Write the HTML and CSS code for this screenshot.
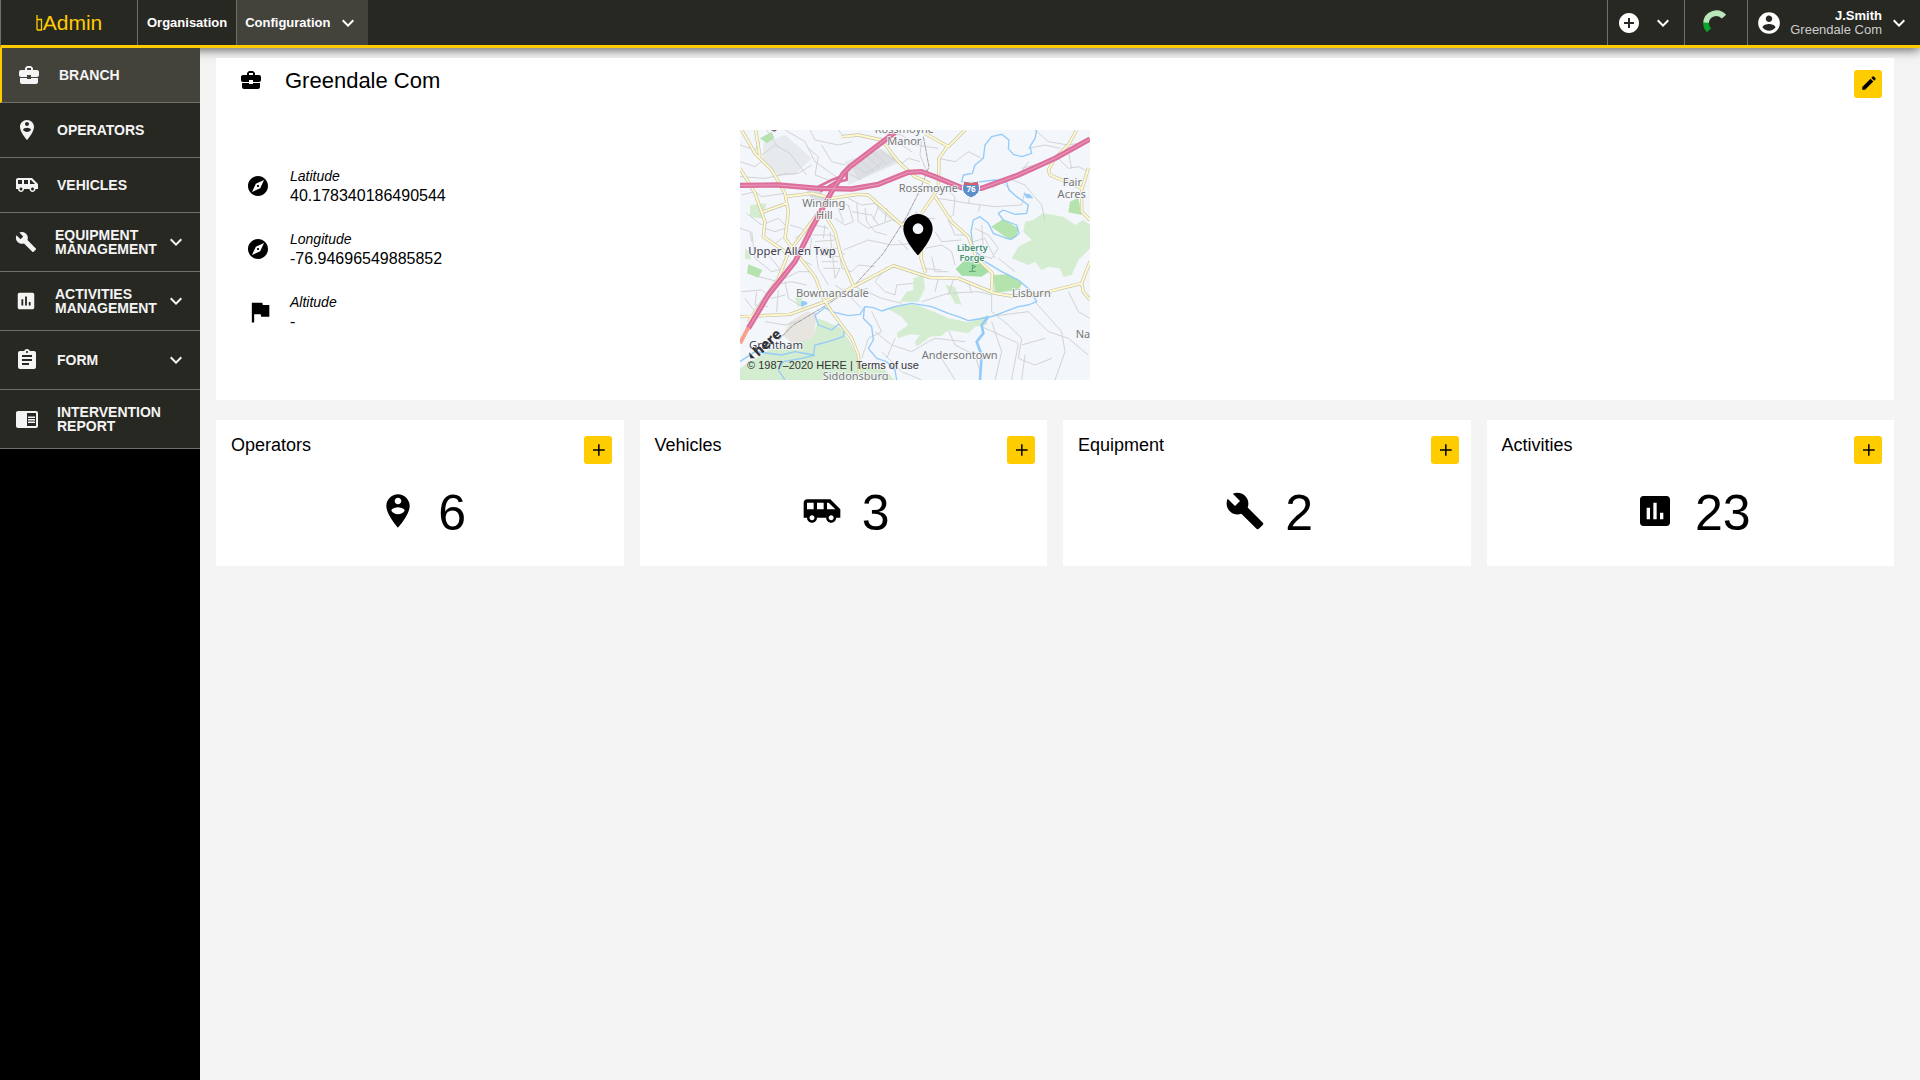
FILE: index.html
```html
<!DOCTYPE html>
<html lang="en">
<head>
<meta charset="utf-8">
<meta name="viewport" content="width=device-width, initial-scale=1">
<title>Admin – Branch</title>
<link rel="stylesheet" href="styles.css">
</head>
<body>
<svg class="sprite" aria-hidden="true">
  <symbol id="i-branch" viewBox="0 0 24 24"><path d="M10 16v-1H3.01L3 19c0 1.11.89 2 2 2h14c1.11 0 2-.89 2-2v-4h-7v1h-4zm10-9h-4.01V5l-2-2h-4l-2 2v2H4c-1.1 0-2 .9-2 2v3c0 1.11.89 2 2 2h6v-2h4v2h6c1.1 0 2-.9 2-2V9c0-1.1-.9-2-2-2zm-6 0h-4V5h4v2z"/></symbol>
  <symbol id="i-operator" viewBox="0 0 24 24"><path d="M12 2C8.14 2 5 5.14 5 9c0 5.25 7 13 7 13s7-7.75 7-13c0-3.86-3.14-7-7-7zm0 2c1.1 0 2 .9 2 2 0 1.11-.9 2-2 2s-2-.89-2-2c0-1.1.9-2 2-2zm0 10c-1.67 0-3.14-.85-4-2.15.02-1.32 2.67-2.05 4-2.05s3.98.73 4 2.05c-.86 1.3-2.33 2.15-4 2.15z"/></symbol>
  <symbol id="i-vehicle" viewBox="0 0 24 24"><path d="M17 5H3c-1.1 0-2 .89-2 2v9h2c0 1.65 1.34 3 3 3s3-1.35 3-3h5.5c0 1.65 1.34 3 3 3s3-1.35 3-3H23v-5l-6-6zM3 11V7h4v4H3zm3 6.5c-.83 0-1.5-.67-1.5-1.5s.67-1.5 1.5-1.5 1.5.67 1.5 1.5-.67 1.5-1.5 1.5zm7-6.5H9V7h4v4zm4.500 6.500c-.83 0-1.5-.67-1.5-1.5s.67-1.5 1.5-1.5 1.5.67 1.5 1.5-.67 1.5-1.5 1.5zM15 11V7h1l4 4h-5z"/></symbol>
  <symbol id="i-wrench" viewBox="0 0 24 24"><path d="M22.7 19l-9.1-9.1c.9-2.3.4-5-1.5-6.9-2-2-5-2.400-7.400-1.300L9 6 6 9 1.600 4.700C.4 7.100.9 10.100 2.900 12.100c1.900 1.900 4.600 2.400 6.900 1.500l9.100 9.100c.4.4 1 .4 1.400 0l2.300-2.300c.5-.4.5-1.100.1-1.400z"/></symbol>
  <symbol id="i-chart" viewBox="0 0 24 24"><path d="M19 3H5c-1.1 0-2 .9-2 2v14c0 1.1.9 2 2 2h14c1.1 0 2-.9 2-2V5c0-1.1-.9-2-2-2zM9 17H7v-7h2v7zm4 0h-2V7h2v10zm4 0h-2v-4h2v4z"/></symbol>
  <symbol id="i-form" viewBox="0 0 24 24"><path d="M19 3h-4.180C14.400 1.840 13.300 1 12 1c-1.300 0-2.400.84-2.820 2H5c-1.1 0-2 .9-2 2v14c0 1.1.9 2 2 2h14c1.1 0 2-.9 2-2V5c0-1.1-.9-2-2-2zm-7 0c.55 0 1 .45 1 1s-.45 1-1 1-1-.45-1-1 .45-1 1-1zm2 14H7v-2h7v2zm3-4H7v-2h10v2zm0-4H7V7h10v2z"/></symbol>
  <symbol id="i-report" viewBox="0 0 24 24"><path d="M13 12h7v1.500h-7zm0-2.500h7V11h-7zm0 5h7V16h-7zM21 4H3c-1.1 0-2 .9-2 2v13c0 1.1.9 2 2 2h18c1.1 0 2-.9 2-2V6c0-1.1-.9-2-2-2zm0 15h-9V6h9v13z"/></symbol>
  <symbol id="i-compass" viewBox="0 0 24 24"><path d="M12 10.900c-.61 0-1.100.49-1.100 1.100s.49 1.100 1.100 1.100c.61 0 1.100-.49 1.100-1.100s-.49-1.100-1.100-1.100zM12 2C6.480 2 2 6.480 2 12s4.480 10 10 10 10-4.480 10-10S17.520 2 12 2zm2.190 12.190L6 18l3.810-8.190L18 6l-3.810 8.190z"/></symbol>
  <symbol id="i-flag" viewBox="0 0 24 24"><path d="M14.400 6L14 4H5v17h2v-7h5.600l.4 2h7V6z"/></symbol>
  <symbol id="i-edit" viewBox="0 0 24 24"><path d="M3 17.250V21h3.750L17.810 9.940l-3.750-3.750L3 17.250zM20.710 7.040c.39-.39.39-1.020 0-1.410l-2.340-2.340c-.39-.39-1.020-.39-1.410 0l-1.830 1.830 3.750 3.750 1.830-1.830z"/></symbol>
  <symbol id="i-add" viewBox="0 0 24 24"><path d="M20 12.900h-6.100V19h-1.800v-6.100H6v-1.800h6.100V5h1.800v6.100H20z"/></symbol>
  <symbol id="i-add-circle" viewBox="0 0 24 24"><path d="M12 2C6.480 2 2 6.480 2 12s4.480 10 10 10 10-4.480 10-10S17.520 2 12 2zm5 11h-4v4h-2v-4H7v-2h4V7h2v4h4v2z"/></symbol>
  <symbol id="i-account" viewBox="0 0 24 24"><path d="M12 2C6.480 2 2 6.480 2 12s4.480 10 10 10 10-4.480 10-10S17.520 2 12 2zm0 3c1.660 0 3 1.340 3 3s-1.340 3-3 3-3-1.340-3-3 1.340-3 3-3zm0 14.200c-2.500 0-4.710-1.280-6-3.220.03-1.990 4-3.080 6-3.080 1.990 0 5.970 1.090 6 3.080-1.290 1.940-3.500 3.220-6 3.220z"/></symbol>
  <symbol id="i-chevron" viewBox="0 0 24 24"><path d="M16.590 8.590L12 13.170 7.410 8.590 6 10l6 6 6-6z"/></symbol>
</svg>

<header class="topbar">
  <a class="logo" href="#">
    <svg class="logo-mark" viewBox="0 0 7 16" aria-hidden="true"><path d="M1 0v15M1 4.500h4.500V15H1"/></svg>Admin
  </a>
  <nav class="topnav" aria-label="Main">
    <a class="topnav-item" href="#">Organisation</a>
    <button class="topnav-item topnav-item-active" type="button">Configuration<svg class="icon"><use href="#i-chevron"/></svg></button>
  </nav>
  <div class="tools">
    <button class="tool tool-add" type="button" aria-label="Create">
      <svg class="icon"><use href="#i-add-circle"/></svg>
      <svg class="icon"><use href="#i-chevron"/></svg>
    </button>
    <div class="tool tool-progress" role="status" aria-label="Loading">
      <svg class="spinner" viewBox="0 0 78 78"><path class="spinner-track" d="M63 20A31 31 0 0 0 9 39"/><path class="spinner-head" d="M9 38A31 31 0 0 0 18 61"/></svg>
    </div>
    <button class="tool tool-user" type="button">
      <svg class="icon icon-user"><use href="#i-account"/></svg>
      <span class="user"><strong class="user-name">J.Smith</strong><span class="user-branch">Greendale Com</span></span>
      <svg class="icon"><use href="#i-chevron"/></svg>
    </button>
  </div>
</header>

<div class="layout">
  <nav class="sidebar" aria-label="Configuration">
    <a class="side-item side-item-active" href="#"><svg class="icon"><use href="#i-branch"/></svg><span class="side-label">BRANCH</span></a>
    <a class="side-item" href="#"><svg class="icon"><use href="#i-operator"/></svg><span class="side-label">OPERATORS</span></a>
    <a class="side-item" href="#"><svg class="icon"><use href="#i-vehicle"/></svg><span class="side-label">VEHICLES</span></a>
    <button class="side-item side-item-tall side-item-group" type="button"><svg class="icon icon-small"><use href="#i-wrench"/></svg><span class="side-label">EQUIPMENT MANAGEMENT</span><svg class="icon"><use href="#i-chevron"/></svg></button>
    <button class="side-item side-item-tall side-item-group" type="button"><svg class="icon icon-small"><use href="#i-chart"/></svg><span class="side-label">ACTIVITIES MANAGEMENT</span><svg class="icon"><use href="#i-chevron"/></svg></button>
    <button class="side-item side-item-tall side-item-group" type="button"><svg class="icon"><use href="#i-form"/></svg><span class="side-label">FORM</span><svg class="icon"><use href="#i-chevron"/></svg></button>
    <a class="side-item side-item-tall" href="#"><svg class="icon"><use href="#i-report"/></svg><span class="side-label">INTERVENTION REPORT</span></a>
  </nav>

  <main class="content">
    <section class="branch">
      <div class="branch-head">
        <svg class="icon"><use href="#i-branch"/></svg>
        <h1 class="branch-title">Greendale Com</h1>
        <button class="action action-edit" type="button" aria-label="Edit branch"><svg class="icon-edit"><use href="#i-edit"/></svg></button>
      </div>
      <div class="branch-body">
        <dl class="facts">
          <div class="fact"><svg class="icon"><use href="#i-compass"/></svg><div><dt class="fact-name">Latitude</dt><dd class="fact-value">40.178340186490544</dd></div></div>
          <div class="fact"><svg class="icon"><use href="#i-compass"/></svg><div><dt class="fact-name">Longitude</dt><dd class="fact-value">-76.94696549885852</dd></div></div>
          <div class="fact"><svg class="icon icon-flag"><use href="#i-flag"/></svg><div><dt class="fact-name">Altitude</dt><dd class="fact-value">-</dd></div></div>
        </dl>
        <svg class="map" viewBox="15 15 1050 750" role="group" aria-label="Branch location">
          <rect x="15" y="15" width="1050" height="750" fill="#f3f6fa"/>
          <!-- built-up areas -->
          <path fill="#e6eaed" d="M85 55L150 30 230 100 180 150 130 150 85 110zM330 110L440 70 500 110 340 180z"/>
          <path fill="#dcdfe2" d="M345 115L430 75 490 105 370 165zM215 195L255 190 270 225 235 235z"/>
          <path fill="#e8e4e0" d="M165 590L215 560 245 565 235 650 175 660 145 630z"/>
          <!-- parks and woodland -->
          <g fill="#d4ecd0">
            <path d="M870 290L895 285 925 265 985 275 1020 300 1045 285 1065 300V370L1030 405 1010 450 985 455 975 430 940 425 920 435 900 410 880 420 830 400 850 365 890 345 865 320z"/>
            <path d="M455 550L500 538 545 540 600 562 640 580 700 592 760 570 755 600 720 605 700 625 640 615 620 632 585 635 545 665 540 650 555 630 525 628 490 640 485 625 520 600 500 575z"/>
            <path d="M535 460L565 450 570 490 550 530 495 530 515 500 535 495z"/>
            <path d="M630 480L660 485 680 540 660 535z"/>
            <path d="M15 730L110 670 235 640 250 580 320 610 345 650 365 690 370 725 450 735 480 765H15z"/>
            <path d="M180 518L200 512 204 540 188 545z"/>
            <path d="M30 370L48 385 46 405 30 400zM45 240L95 235 80 280 45 275z"/>
          </g>
          <g fill="#b5e3ae">
            <path d="M75 40L110 20 118 40 95 55zM40 418L82 435 70 458 36 445z"/>
            <path d="M768 305L805 282 850 310 845 335 825 345z"/>
            <path d="M775 450L820 448 862 475 850 495 780 503z"/>
            <path d="M1005 230L1030 218 1040 270 1000 262z"/>
          </g>
          <path fill="#a5dfa8" d="M662 432L690 405 735 402 762 440 740 455 680 452z"/>
          <!-- minor roads -->
          <g class="road-minor">
            <path d="M15 60L60 75 75 50M80 90L120 60 165 85 215 150M95 15L125 60M150 15L210 50 240 110 310 160M130 150L190 145 230 120M15 110L60 125 85 105M20 210L60 200 80 215 150 205M35 265L80 300 130 280 150 300M15 310L45 320 50 350M90 310L120 320 150 310M100 340L115 360 140 340"/>
            <path d="M345 115L395 145 445 110M370 100L415 140M390 90L435 128M410 80L455 116M430 70L475 105M340 145L380 165M470 80L500 115 520 100 555 110M440 25L500 30 540 60 610 70M560 45L555 90 580 150M500 60L530 80"/>
            <path d="M225 15L240 45 310 60 350 50M260 60L290 110 330 120M310 15L330 40M220 70L250 95 240 150 280 165M15 155L90 160 160 145"/>
            <path d="M290 230L340 240 355 290 330 300 300 280M310 250L325 290M340 220L380 240 420 235 440 260 480 290M350 260L410 270 430 300 470 285M365 235L370 290 400 310M390 250L395 290 420 320 455 330M430 245L415 285M455 250L450 290"/>
            <path d="M165 300L200 310 230 340 225 375M180 340L240 300 280 310M230 330L290 330 310 350M240 350L300 345M250 370L310 370 330 390M255 390L315 395 320 430 350 440M260 410L310 410M265 430L315 430 300 460M270 300L265 340M285 320L300 460M240 360L250 430 280 480"/>
            <path d="M50 320L60 400 110 440 150 430M100 390L150 450M70 455L130 470 190 440 230 440M110 480L170 470 215 480M20 500L80 495 110 520 150 510M30 520L60 560M65 500L60 540 100 545M150 470L160 520 210 550M130 495L125 560M90 590L150 600 200 585M170 410L190 400 230 420"/>
            <path d="M325 375L400 345 470 360 545 355M350 440L370 420 420 425M400 310L430 300M490 345L520 375M455 425L420 470 450 500 480 510 485 480 535 475M360 485L440 520 500 535M300 480L330 500 380 550M350 500L400 490"/>
            <path d="M610 100L660 110 700 80 740 100M620 180L660 215 655 270 640 280M610 220L700 235 780 245 860 240 870 200M700 235L710 190M730 260L735 240M770 190L820 160 870 180 920 240 930 290M830 160L860 140 880 110M790 160L830 200M860 130L940 110 1000 80M880 70L930 60 975 70M900 15L940 50 1000 60 1060 50M970 100L1000 130 1030 125 1060 140M1000 80L1010 130"/>
            <path d="M570 370L620 360 650 380 660 420M590 395L600 440 640 440M560 430L620 435M600 320L620 350 680 345M540 260L570 280 600 280M640 285L660 330 700 330M720 310L760 330 790 370 770 400 730 390M715 350L750 340 780 400M740 300L745 370M720 405L760 360M790 400L840 440"/>
            <path d="M560 530L640 505 730 500 770 510M610 460L600 500M655 465L640 510M700 470L710 505M770 510V560L820 600 860 640 850 700M760 575L880 560 940 620 1000 640 1060 690M770 590L800 680 780 765M900 530L980 620 990 680 960 765M1000 500L1030 560 1065 580M860 660L930 640M850 700L900 720 950 700"/>
            <path d="M420 620L470 660 530 680 580 650M440 680L500 740 560 765M640 615L660 660 720 690 735 740M580 650L600 640 690 650M740 605L850 655 830 765M620 700L660 765M480 640L455 700M870 690L860 765M410 560L440 620 400 640 380 700"/>
          </g>
          <!-- railway -->
          <path class="rail" d="M565 35L582 125 555 195 515 275 445 385 355 485 275 540 175 600 130 645"/>
          <!-- rivers and ponds -->
          <g class="river">
            <path d="M905 15L900 40 885 65 890 85 860 95 835 88 820 70 822 45 800 28 770 35 750 60 745 100 720 120 712 145 685 150 680 170 720 172 780 165 815 172 822 195 845 215 880 240 875 265 840 268 805 255 790 265 805 285 845 300 852 325 830 343 815 340 775 325 760 295 735 275 715 285 708 320 715 370 750 410 800 440 850 465 885 495 905 530 880 540 850 545 770 575 730 582 700 587 670 575 640 565 590 545 530 535 480 545 440 558 415 548 390 545 375 568 340 572 290 560 270 548 240 570 250 600 290 615 310 598 328 612 325 635 280 650 240 660 235 690 180 680 140 690 60 680 15 710"/>
            <path class="river-wide" d="M760 575L740 600 745 625 725 650 740 690 735 765"/>
            <path d="M388 550L385 580 410 605 415 645 400 670 425 700 455 710 480 735 485 765M240 690L200 700 145 710 130 735 150 765"/>
          </g>
          <path fill="#94cbfa" d="M865 205L885 208 895 220 875 220zM198 530Q210 524 218 535 212 546 198 542z"/>
          <!-- main roads: casing, then fill -->
          <g class="road-case"><path id="roads" d="M20 15L60 85 110 135 150 205 160 260 150 340 185 385 240 455 265 520 290 560 350 640 370 690 375 765M62 15L75 95M15 130L60 205 90 290 85 335 150 380M80 262L155 235M150 215L230 205 290 220 370 208 400 210 500 300 550 270M270 270L300 320 320 400 355 482M320 35L370 30 440 45 490 110 540 155 585 175M570 25L640 65 690 15M640 60L612 100 610 190 560 265M600 215L650 290 700 335 725 400 772 445 770 500M260 250L200 330 160 385 130 460 40 590M15 575L165 568 270 530 355 485 475 422 585 458 670 460 780 505 830 513 900 510 1040 475 1065 410M560 370L558 400 572 445M1040 475L1045 500 1065 525M960 100L940 135 945 150 1040 190 1040 260 1065 285M960 100L1000 60 1025 15M1040 195L1060 130"/></g>
          <use class="road-main" href="#roads"/>
          <!-- highways -->
          <g class="highway">
            <path d="M15 181L130 180 250 190 350 192 430 178 520 142 560 140 600 155 680 188 740 190 850 150 960 100 1065 42"/>
            <path d="M480 22L345 125 325 145 290 200 230 310 180 410 100 510 40 610"/>
            <path class="ramp" d="M335 130L335 165 300 172 255 200M250 185L290 165 330 150"/>
          </g>
          <g class="highway-line">
            <path d="M15 181L130 180 250 190 350 192 430 178 520 142 560 140 600 155 680 188 740 190 850 150 960 100 1065 42"/>
            <path d="M480 22L345 125 325 145 290 200 230 310 180 410 100 510 40 610"/>
          </g>
          <path d="M40 608L15 655" stroke="#f9a08c" stroke-width="12"/>
          <!-- interstate shield -->
          <path d="M688 168Q708 176 728 168 738 192 730 203 722 214 708 219 694 214 686 203 678 192 688 168z" fill="#5c8ec8" stroke="#fff" stroke-width="3"/>
          <path d="M688 170Q708 178 728 170L730 180H686z" fill="#dc5e68"/>
          <text class="shield" x="708" y="202">76</text>
          <g class="place">
            <text x="508" y="24">Rossmoyne</text><text x="508" y="59">Manor</text>
            <text x="580" y="200">Rossmoyne</text>
            <text x="1012" y="182">Fair</text><text x="1010" y="218">Acres</text>
            <text x="266" y="246">Winding</text><text x="268" y="281">Hill</text>
            <text x="292" y="515">Bowmansdale</text>
            <text x="889" y="515">Lisburn</text>
            <text x="674" y="701">Andersontown</text>
            <text x="362" y="764">Siddonsburg</text>
            <text x="1044" y="638">Na</text>
            <text class="place-town" x="171" y="389">Upper Allen Twp</text>
            <text class="place-town" x="123" y="671">Grantham</text>
            <text class="place-park" x="712" y="377">Liberty</text><text class="place-park" x="711" y="408">Forge</text>
          </g>
          <path d="M712 420v18M712 420l10 5-10 5M702 439h20" fill="none" stroke="#58a07c" stroke-width="3"/>
          <path d="M110 15l8 3 6-3" fill="none" stroke="#666" stroke-width="4"/>
          <text class="here" transform="translate(70 696) rotate(-42)">here</text>
          <path d="M42 682l18 18-14 0z" fill="#333"/>
          <text class="credit" x="36" y="731">© 1987–2020 HERE | <a href="#">Terms of use</a></text>
          <path fill-rule="evenodd" d="M549 267C524 267 505 287 505 311 505 344 549 391 549 391S593 344 593 311C593 287 573 267 549 267zM549 295a16 16 0 1 1 0 32 16 16 0 0 1 0-32z"/>
        </svg>
      </div>
    </section>

    <div class="cards">
      <section class="card"><div class="card-head"><h2 class="card-title">Operators</h2><button class="action" type="button" aria-label="Add operator"><svg class="icon-add"><use href="#i-add"/></svg></button></div><div class="card-stat"><svg class="icon-stat"><use href="#i-operator"/></svg><span class="card-count">6</span></div></section>
      <section class="card"><div class="card-head"><h2 class="card-title">Vehicles</h2><button class="action" type="button" aria-label="Add vehicle"><svg class="icon-add"><use href="#i-add"/></svg></button></div><div class="card-stat"><svg class="icon-stat"><use href="#i-vehicle"/></svg><span class="card-count">3</span></div></section>
      <section class="card"><div class="card-head"><h2 class="card-title">Equipment</h2><button class="action" type="button" aria-label="Add equipment"><svg class="icon-add"><use href="#i-add"/></svg></button></div><div class="card-stat"><svg class="icon-stat"><use href="#i-wrench"/></svg><span class="card-count">2</span></div></section>
      <section class="card"><div class="card-head"><h2 class="card-title">Activities</h2><button class="action" type="button" aria-label="Add activity"><svg class="icon-add"><use href="#i-add"/></svg></button></div><div class="card-stat"><svg class="icon-stat"><use href="#i-chart"/></svg><span class="card-count">23</span></div></section>
    </div>
  </main>
</div>
</body>
</html>
```
FILE: styles.css
```css
*, *::before, *::after { box-sizing: border-box; }

body {
  margin: 0;
  min-height: 100vh;
  display: flex;
  flex-direction: column;
  background: #f4f4f4;
  color: #000;
  font-family: "Liberation Sans", Arial, sans-serif;
  font-size: 16px;
}

h1, h2, dl, dd { margin: 0; font-weight: 400; }
a { color: inherit; text-decoration: none; }
button { border: 0; padding: 0; background: none; color: inherit; font: inherit; text-align: left; cursor: pointer; }

.sprite { position: absolute; width: 0; height: 0; }
.icon { width: 24px; height: 24px; flex: none; fill: currentColor; }
.icon-small { width: 22px; height: 22px; }
.icon-user { width: 26px; height: 26px; }
.icon-flag { width: 28px; height: 28px; }
.icon-edit { width: 18px; height: 18px; }
.icon-add { width: 20px; height: 20px; }
.icon-stat { width: 40px; height: 40px; }

/* Top bar */
.topbar {
  display: flex;
  height: 48px;
  border-bottom: 3px solid #fc0;
  border-left: 1px solid #70706b;
  background: #282823;
  color: #fff;
  box-shadow: 0 2px 10px rgba(0, 0, 0, 0.6);
}
.logo {
  width: 137px;
  display: flex;
  align-items: center;
  justify-content: center;
  border-right: 1px solid #70706b;
  color: #fc0;
  font-size: 21px;
}
.logo-mark { width: 7px; height: 16px; fill: none; stroke: #fc0; stroke-width: 1.3; }
.topnav { display: flex; font-size: 13px; font-weight: 700; }
.topnav-item { display: flex; align-items: center; padding: 0 9px; }
.topnav-item-active { gap: 6px; padding: 0 8px; border-left: 1px solid #70706b; background: #43433b; }
.tools { display: flex; margin-left: auto; }
.tool { display: flex; align-items: center; border-left: 1px solid #70706b; }
.tool-add { gap: 10px; padding: 0 9px; }
.tool-progress { padding: 0 18px; }
.tool-user { gap: 5px; padding: 0 9px 0 8px; }
.spinner { width: 26px; height: 26px; fill: none; stroke-width: 17; }
.spinner-track { stroke: #b9e6bb; }
.spinner-head { stroke: #0aa52b; }
.user { min-width: 95px; display: flex; flex-direction: column; align-items: flex-end; line-height: 14px; font-size: 13px; }
.user-branch { color: #ccc; }

/* Side menu */
.layout { flex: 1; display: flex; }
.sidebar { width: 200px; flex: none; display: flex; flex-direction: column; background: #000; color: #f4f4f4; }
.side-item {
  min-height: 55px;
  display: flex;
  align-items: center;
  gap: 18px;
  padding: 0 15px;
  border-bottom: 1px solid #70706b;
  background: #282823;
  font-size: 14px;
  font-weight: 700;
  line-height: 14px;
}
.side-item-active { border-left: 2px solid #fc0; background: #43433b; }
.side-item-tall { min-height: 59px; }
.side-item-group { padding-right: 12px; }
.side-label { flex: 1; min-width: 0; }
.side-item-group .side-label { margin-right: -18px; }

/* Content */
.content { flex: 1; min-width: 0; padding: 10px 26px 20px 16px; }
.branch, .card { position: relative; background: #fff; }
.branch { margin-bottom: 20px; padding: 12px 0 20px; }
.branch-head { display: flex; align-items: flex-start; gap: 22px; height: 60px; padding: 0 12px 0 23px; }
.branch-head .icon { margin-top: -2px; }
.branch-title { flex: 1; margin-top: -1px; font-size: 22px; line-height: 24px; }
.action {
  width: 28px;
  height: 28px;
  flex: none;
  display: flex;
  align-items: center;
  justify-content: center;
  border-radius: 3px;
  background: #fc0;
}
.action-edit { padding: 0 0 3px 2px; }
.branch-body { display: grid; grid-template-columns: 5fr 11fr; }
.facts { display: flex; flex-direction: column; gap: 23px; padding: 36px 0 0 30px; }
.fact { display: grid; grid-template-columns: 28px 1fr; align-items: center; gap: 16px; line-height: 20px; }
.fact-name { font-size: 14px; font-style: italic; }

/* Map */
.map { width: 350px; height: 250px; overflow: hidden; }
.road-minor { fill: none; stroke: #d2d3d5; stroke-width: 3; }
.rail { fill: none; stroke: #777; stroke-width: 2; stroke-dasharray: 14 2; }
.river { fill: none; stroke: #94cbfa; stroke-width: 4; stroke-linejoin: round; }
.river-wide { stroke-width: 8; }
.road-case { fill: none; stroke: #c6c4ac; stroke-width: 10; stroke-linejoin: round; }
.road-main { stroke: #fff8cc; stroke-width: 6; }
.road-main, .highway, .highway-line { fill: none; stroke-linejoin: round; }
.highway { stroke: #dd6f9d; stroke-width: 16; }
.ramp { stroke-width: 8; }
.highway-line { stroke: #ec9dbd; stroke-width: 3; }
.place { fill: #777; stroke: #f6f8fb; stroke-width: 5; paint-order: stroke; font-family: "Noto Sans", sans-serif; font-size: 33px; text-anchor: middle; }
.place-town { fill: #3f4152; font-size: 34px; }
.place-park { fill: #45906f; font-size: 27px; font-weight: 600; }
.shield { fill: #fff; font-family: "Noto Sans", sans-serif; font-size: 24px; font-weight: 700; text-anchor: middle; }
.here { fill: #333; font-family: "Noto Sans", sans-serif; font-size: 42px; font-weight: 800; }
.credit { fill: #333; font-size: 33px; }

/* Count cards */
.cards { display: grid; grid-template-columns: repeat(4, 1fr); gap: 16px; }
.card { padding: 16px 12px 20px 15px; }
.card-head { display: flex; justify-content: space-between; }
.card-title { font-size: 18px; line-height: 18px; }
.card-stat { display: flex; align-items: center; justify-content: center; gap: 20px; padding: 17px 0 5px 2px; }
.card-count { padding-top: 4px; font-size: 50px; line-height: 56px; }
```
